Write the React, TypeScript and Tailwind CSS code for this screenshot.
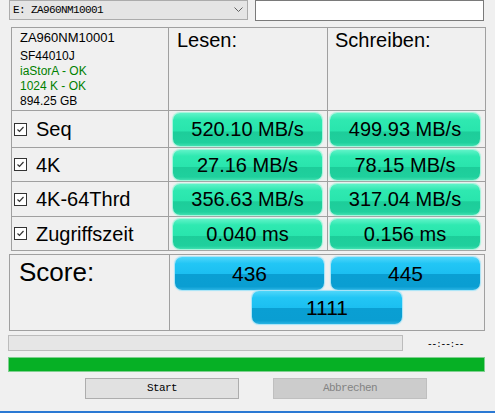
const rows = [
	{ label: "Seq", read: "520.10 MB/s", write: "499.93 MB/s", h: "h-[37px]", cell: "h-[33px]" },
	{ label: "4K", read: "27.16 MB/s", write: "78.15 MB/s", h: "h-[34px]", cell: "h-[30px]" },
	{ label: "4K-64Thrd", read: "356.63 MB/s", write: "317.04 MB/s", h: "h-[35px]", cell: "h-[31px]" },
	{ label: "Zugriffszeit", read: "0.040 ms", write: "0.156 ms", h: "h-[34px]", cell: "h-[30px]" },
];

const green =
	"rounded-[7px] bg-[linear-gradient(to_bottom,#5ff3c8_0%,#2fe9b1_20%,#29e5ad_55%,#1dcd9a_57%,#1fd09d_90%,#3fe0b0_100%)] shadow-[0_0_1px_1px_#9ff5da] flex items-center justify-center text-[20px] text-black";

const blue =
	"rounded-[7px] bg-[linear-gradient(to_bottom,#4fd6fa_0%,#22c6f5_20%,#1cbff1_50%,#0a9fd3_53%,#0a9ed2_90%,#2ab4e4_100%)] shadow-[0_0_1px_1px_#a6e4f8] flex items-center justify-center text-[21px] text-black";

const Check = () => (
	<div className="w-[13px] h-[13px] border border-[#333333] bg-white flex items-center justify-center">
		<svg width="9" height="9" viewBox="0 0 9 9">
			<polyline points="1.5,4.5 3.5,6.5 7.5,2" fill="none" stroke="#333" strokeWidth="1.2" />
		</svg>
	</div>
);

export default function App() {
	return (
		<div className="w-[495px] h-[413px] bg-[#f0f0f0] flex flex-col overflow-hidden font-['Liberation_Sans',Arial,sans-serif] text-black">
			{/* drive select + name box */}
			<div className="flex h-[21px] pl-[9px] gap-[7px] shrink-0">
				<div className="w-[239px] h-[20px] border border-[#acacac] bg-[#e5e5e5] flex items-center pl-[3px] pr-[4px] font-['Liberation_Mono',monospace] text-[11px] tracking-[-0.6px]">
					<span className="flex-1">E: ZA960NM10001</span>
					<svg width="9" height="6" viewBox="0 0 9 6">
						<polyline points="0.5,0.5 4.5,4.5 8.5,0.5" fill="none" stroke="#606060" strokeWidth="1" />
					</svg>
				</div>
				<div className="w-[229px] h-[21px] border border-[#7a7a7a] bg-white" />
			</div>

			{/* results table */}
			<div className="mt-[6px] ml-[11px] w-[475px] grid grid-cols-[157px_159px_158px] border-t border-l border-[#a0a0a0] shrink-0">
				<div className="h-[83px] border-r border-b border-[#a0a0a0] pl-[8px] pt-[1px]">
					<div className="text-[13px] leading-[18px] mb-[2px]">ZA960NM10001</div>
					<div className="text-[12px] leading-[15px]">SF44010J</div>
					<div className="text-[12px] leading-[15px] text-[#008000]">iaStorA - OK</div>
					<div className="text-[12px] leading-[15px] text-[#008000]">1024 K - OK</div>
					<div className="text-[12px] leading-[15px]">894.25 GB</div>
				</div>
				<div className="h-[83px] border-r border-b border-[#a0a0a0] pl-[8px] text-[20px] leading-[24px]">Lesen:</div>
				<div className="h-[83px] border-r border-b border-[#a0a0a0] pl-[7px] text-[20px] leading-[24px]">Schreiben:</div>

				{rows.map((r) => (
					<>
						<div key={r.label + "l"} className={`${r.h} border-r border-b border-[#a0a0a0] flex items-center pl-[2px] gap-[9px]`}>
							<Check />
							<span className="text-[20px]">{r.label}</span>
						</div>
						<div key={r.label + "r"} className={`${r.h} border-r border-b border-[#a0a0a0] flex items-center pl-[4px]`}>
							<div className={`${r.cell} w-[149px] ${green}`}>{r.read}</div>
						</div>
						<div key={r.label + "w"} className={`${r.h} border-r border-b border-[#a0a0a0] flex items-center pl-[2px]`}>
							<div className={`${r.cell} w-[150px] ${green}`}>{r.write}</div>
						</div>
					</>
				))}
			</div>

			{/* score */}
			<div className="mt-[3px] ml-[9px] w-[476px] h-[77px] border border-[#a0a0a0] flex shrink-0">
				<div className="w-[160px] border-r border-[#a0a0a0] pl-[9px] pt-[2px] text-[26px] leading-[30px]">Score:</div>
				<div className="flex flex-col pt-[2px] gap-[1px]">
					<div className="flex gap-[7px] pl-[5px]">
						<div className={`w-[149px] h-[33px] ${blue}`}>436</div>
						<div className={`w-[149px] h-[33px] ${blue}`}>445</div>
					</div>
					<div className="pl-[82px]">
						<div className={`w-[150px] h-[33px] ${blue}`}>1111</div>
					</div>
				</div>
			</div>

			{/* progress */}
			<div className="mt-[4px] ml-[8px] flex items-center shrink-0">
				<div className="w-[395px] h-[16px] border border-[#bcbcbc] bg-[#e6e6e6]" />
				<span className="ml-[25px] text-[10px] tracking-[1px] font-['DejaVu_Sans',sans-serif]">--:--:--</span>
			</div>
			<div className="mt-[6px] ml-[8px] w-[477px] h-[15px] border border-[#7fd08f] bg-[#06b025] shrink-0" />

			{/* buttons */}
			<div className="mt-[6px] ml-[85px] flex gap-[34px] shrink-0 font-['Liberation_Mono',monospace] text-[11px] tracking-[-0.6px]">
				<div className="w-[154px] h-[21px] border border-[#adadad] bg-[#e1e1e1] flex items-center justify-center">Start</div>
				<div className="w-[154px] h-[21px] border border-[#bfbfbf] bg-[#cccccc] text-[#838383] flex items-center justify-center">Abbrechen</div>
			</div>

			<div className="mt-auto h-[2px] bg-[#2b79d3] shrink-0" />
		</div>
	);
}
